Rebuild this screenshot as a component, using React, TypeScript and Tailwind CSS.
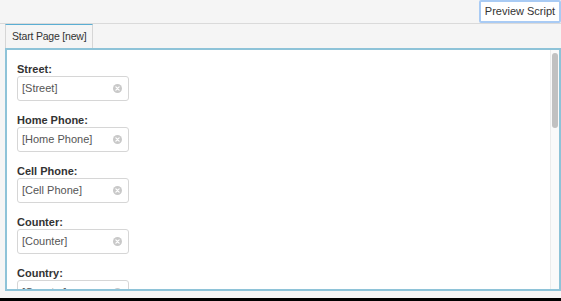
const fields = ["Street", "Home Phone", "Cell Phone", "Counter", "Country"];

const ClearIcon = () => (
  <svg width="9" height="9" viewBox="0 0 10 10">
    <circle cx="5" cy="5" r="5" fill="#c9c9c9" />
    <path d="M3.2 3.2 L6.8 6.8 M6.8 3.2 L3.2 6.8" stroke="#fff" strokeWidth="1.4" strokeLinecap="round" />
  </svg>
);

const App = () => {
  return (
    <div className="w-[561px] h-[301px] bg-[#f5f5f5] flex flex-col overflow-hidden font-['Liberation_Sans',Arial,sans-serif] text-[#333]">
      {/* Top bar */}
      <div className="h-[24px] flex justify-end border-b border-[#dadada] shrink-0">
        <button className="h-[23px] w-[82px] bg-white border-2 border-[#a9cbf4] rounded-[2px] text-[11px] text-[#333] whitespace-nowrap">
          Preview Script
        </button>
      </div>

      {/* Tabs */}
      <div className="h-[24px] pl-[5px] flex shrink-0">
        <div className="h-[24px] bg-[#f5f5f5] border-t border-x border-t-[#5aaed3] border-x-[#d6d6d6] flex items-center px-[6px] text-[10.5px] tracking-[-0.2px] text-[#333] whitespace-nowrap">
          Start Page [new]
        </div>
      </div>

      {/* Panel */}
      <div className="ml-[5px] h-[243px] shrink-0 border-2 border-[#8ec3d8] bg-white flex overflow-hidden">
        <div className="flex-1 pl-[10px] pt-[12px] overflow-hidden">
          {fields.map((f) => (
            <div key={f} className="mb-[12px]">
              <div className="text-[11px] font-bold leading-[14px] text-[#333]">{f}:</div>
              <div className="w-[112px] h-[25px] border border-[#d6d6d6] rounded-[3px] flex items-center justify-between pl-[4px] pr-[6px] bg-white">
                <span className="text-[11px] text-[#555] whitespace-nowrap">[{f}]</span>
                <ClearIcon />
              </div>
            </div>
          ))}
        </div>
        <div className="w-[9px] border-l border-[#ececec] bg-[#fafafa] pt-[3px] flex justify-center">
          <div className="w-[6px] h-[75px] rounded-full bg-[#c1c1c1]" />
        </div>
      </div>

      <div className="h-[7px] shrink-0" />
      <div className="flex-1 bg-black" />
    </div>
  );
};

export default App;
